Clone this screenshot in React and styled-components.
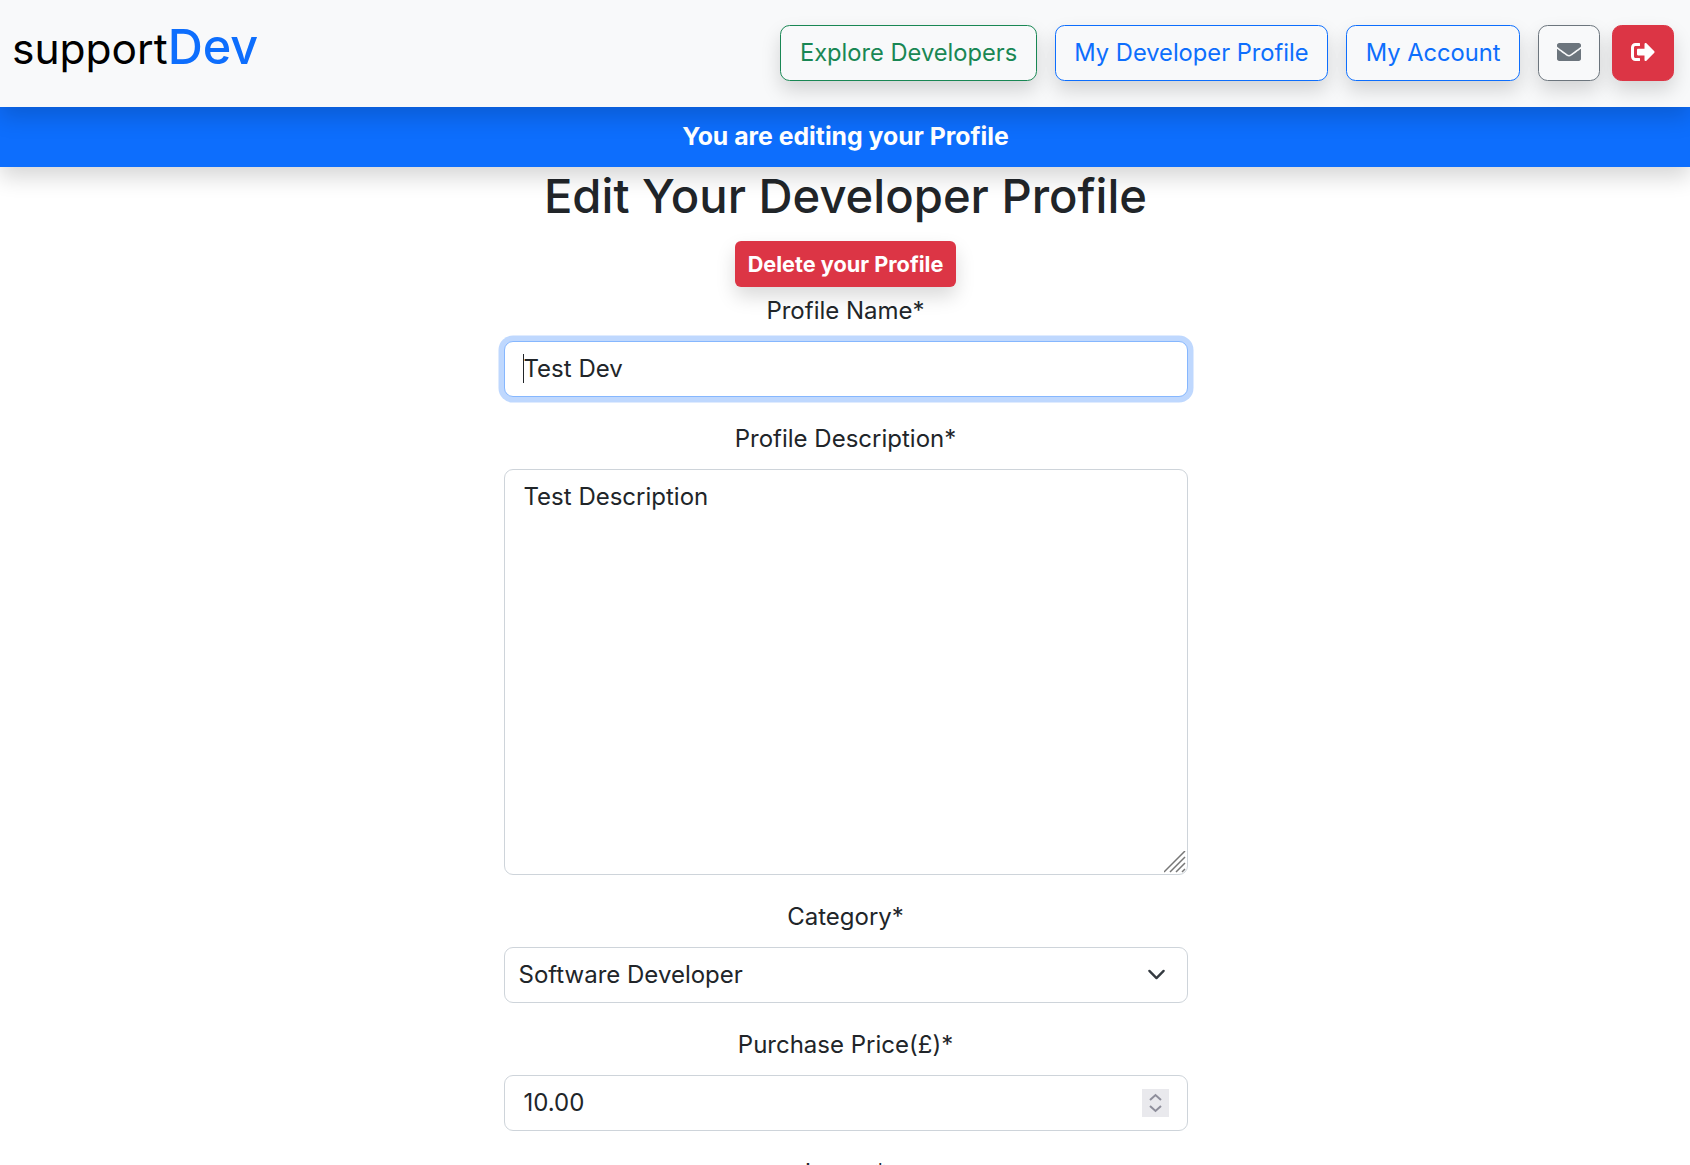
import React from 'react';
import styled, { createGlobalStyle } from 'styled-components';
import { FaEnvelope, FaSignOutAlt } from 'react-icons/fa';

const GlobalStyle = createGlobalStyle`
  html, body {
    margin: 0;
    padding: 0;
    height: 1165px;
    overflow: hidden;
    background: #fff;
  }
  body {
    font-family: Inter, "Noto Sans", sans-serif;
    color: #212529;
  }
  * {
    box-sizing: border-box;
  }
`;

const colours = {
  green: '#198754',
  blue: '#0d6efd',
  grey: '#6c757d',
};

const shadow = '0 9.6px 19.2px rgba(0, 0, 0, 0.15)';
const headerShadow = '0 10px 22px rgba(0, 0, 0, 0.165)';

//* * Header * *//

const Navbar = styled.nav`
  position: relative;
  z-index: 2;
  height: 107px;
  background: #f8f9fa;
  display: flex;
  align-items: flex-start;
  justify-content: space-between;
  padding: 25px 16px 0 12px;
  box-shadow: ${headerShadow};
`;

const Logo = styled.a`
  margin-top: -1px;
  font-size: 42.5px;
  line-height: 46px;
  color: #000;
`;

const LogoAccent = styled.span`
  color: #0d6efd;
  font-size: 48.6px;
  font-weight: 500;
`;

const NavButtons = styled.div`
  display: flex;
  gap: 18px;
  &> :last-child {
    margin-left: -6px;
  }
`;

const NavButton = styled.button`
  height: 56px;
  padding: 0 18.5px 2px;
  font-family: inherit;
  font-size: 23.7px;
  background: transparent;
  border: 1px solid ${(p) => colours[p.$tone]};
  border-radius: 9.6px;
  color: ${(p) => colours[p.$tone]};
  box-shadow: ${shadow};
`;

const IconButton = styled(NavButton)`
  width: 62px;
  padding: 0 0 2px;
  display: flex;
  align-items: center;
  justify-content: center;
  font-size: 24px;
  background: ${(p) => (p.$solid ? '#dc3545' : 'transparent')};
  border-color: ${(p) => (p.$solid ? '#dc3545' : colours.grey)};
  color: ${(p) => (p.$solid ? '#fff' : colours.grey)};
`;

const Banner = styled.div`
  position: relative;
  z-index: 1;
  height: 60px;
  padding: 0 0 2px 1px;
  background: #0d6efd;
  color: #fff;
  font-size: 24.8px;
  font-weight: 700;
  display: flex;
  align-items: center;
  justify-content: center;
  box-shadow: ${headerShadow};
`;

//* * Form * *//

const Main = styled.main`
  display: flex;
  flex-direction: column;
  align-items: center;
  padding-left: 1px;
`;

const Title = styled.h1`
  margin: 0;
  font-size: 47.2px;
  line-height: 58px;
  font-weight: 500;
  text-align: center;
`;

const DeleteButton = styled.button`
  margin-top: 16px;
  height: 46px;
  padding: 0 13px;
  border: 0;
  border-radius: 6px;
  background: #dc3545;
  color: #fff;
  font-family: inherit;
  font-size: 21.7px;
  font-weight: 700;
  box-shadow: ${shadow};
`;

const Form = styled.form`
  width: 684px;
  display: flex;
  flex-direction: column;
`;

const Label = styled.label`
  display: block;
  text-align: center;
  font-size: 24px;
  line-height: 36px;
  margin-top: ${(p) => p.$top || 24}px;
  margin-bottom: 12px;
`;

const fieldStyles = `
  display: flex;
  align-items: center;
  width: 100%;
  height: 56px;
  padding: 0 19px 1px;
  font-family: inherit;
  font-size: 24px;
  color: #212529;
  background: #fff;
  border: 1px solid #ced4da;
  border-radius: 9px;
`;

const TextInput = styled.div`
  ${fieldStyles}
  position: relative;
  border-color: #86b7fe;
  box-shadow: 0 0 0 5.5px #bfd8fe;
`;

const Caret = styled.span`
  position: absolute;
  left: 18px;
  top: 12px;
  width: 1px;
  height: 29px;
  background: #212529;
`;

const TextArea = styled.div`
  ${fieldStyles}
  position: relative;
  height: 406px;
  align-items: flex-start;
  padding-top: 9px;
  line-height: 36px;
`;

const Grip = styled.svg`
  position: absolute;
  right: 1px;
  bottom: 1px;
`;

const SelectBox = styled.div`
  ${fieldStyles}
  justify-content: space-between;
  padding: 0 21px 1px 14px;
`;

const NumberBox = styled.div`
  ${fieldStyles}
  justify-content: space-between;
  padding-right: 18px;
`;

const Spinner = styled.svg`
  background: #e9e9ed;
`;

const App = () => (
  <>
    <GlobalStyle />
    <header>
      <Navbar>
        <Logo>support<LogoAccent>Dev</LogoAccent></Logo>
        <NavButtons>
          <NavButton $tone="green">Explore Developers</NavButton>
          <NavButton $tone="blue">My Developer Profile</NavButton>
          <NavButton $tone="blue">My Account</NavButton>
          <IconButton $tone="grey" aria-label="Messages"><FaEnvelope /></IconButton>
          <IconButton $tone="grey" $solid aria-label="Log out"><FaSignOutAlt /></IconButton>
        </NavButtons>
      </Navbar>
      <Banner>You are editing your Profile</Banner>
    </header>
    <Main>
      <Title>Edit Your Developer Profile</Title>
      <DeleteButton>Delete your Profile</DeleteButton>
      <Form>
        <Label $top={6}>Profile Name*</Label>
        <TextInput><Caret />Test Dev</TextInput>
        <Label>Profile Description*</Label>
        <TextArea>
          Test Description
          <Grip width="22" height="22" viewBox="0 0 22 22">
            <path d="M0 21L21 0M6 21L21 6M12 21L21 12M18 21L21 18" stroke="#777" strokeWidth="1.5" fill="none" />
          </Grip>
        </TextArea>
        <Label>Category*</Label>
        <SelectBox>
          Software Developer
          <svg width="19" height="19" viewBox="0 0 16 16">
            <path d="M2 5l6 6 6-6" fill="none" stroke="#343a40" strokeWidth="2" strokeLinecap="round" strokeLinejoin="round" />
          </svg>
        </SelectBox>
        <Label>Purchase Price(£)*</Label>
        <NumberBox>
          10.00
          <Spinner width="27" height="28" viewBox="0 0 27 28">
            <path d="M8 11l5.5-5 5.5 5M8 17l5.5 5 5.5-5" fill="none" stroke="#8e8e9b" strokeWidth="2" />
          </Spinner>
        </NumberBox>
        <Label>Image*</Label>
      </Form>
    </Main>
  </>
);

export default App;
